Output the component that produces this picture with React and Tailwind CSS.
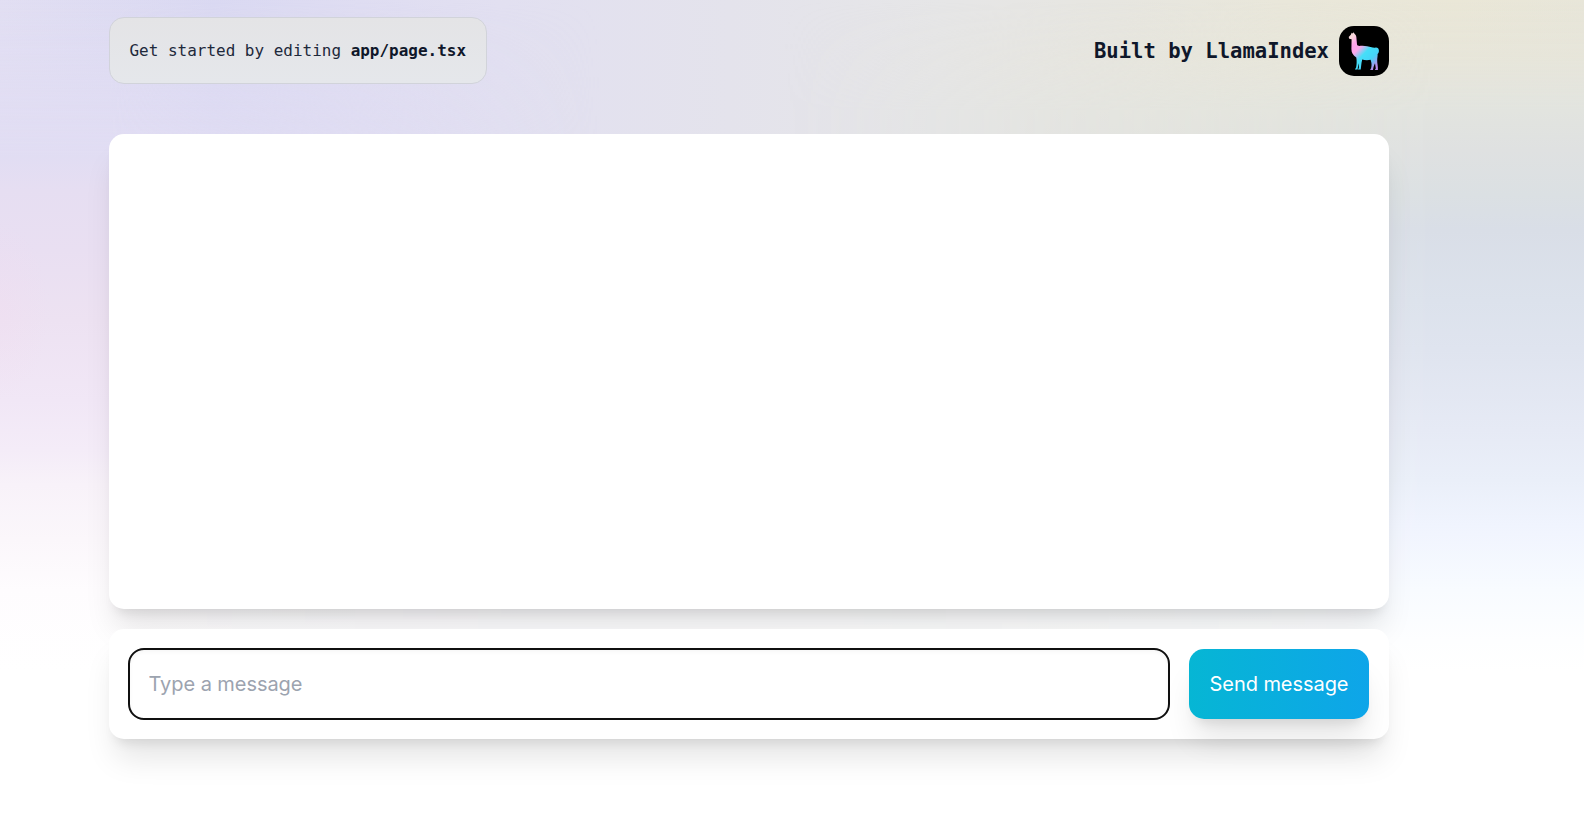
function Llama() {
  return (
    <svg viewBox="0 0 50 50" className="size-[50px] rounded-[15px]" aria-label="LlamaIndex Logo">
      <defs>
        <linearGradient id="llama" x1="10" y1="7" x2="42" y2="38" gradientUnits="userSpaceOnUse">
          <stop offset="0.03" stopColor="#f6dcd9" />
          <stop offset="0.12" stopColor="#fbd6dc" />
          <stop offset="0.25" stopColor="#ffa5ea" />
          <stop offset="0.4" stopColor="#fba8ea" />
          <stop offset="0.57" stopColor="#45dff8" />
          <stop offset="0.76" stopColor="#45d4f8" />
          <stop offset="0.95" stopColor="#bc8deb" />
        </linearGradient>
      </defs>
      <rect width="50" height="50" fill="#000" />
      <path
        fill="url(#llama)"
        d="M11.8 8.8 12.7 6.8 13.7 7.4 14.6 6.2 15.5 7.8C17 8.8 17.5 10.6 17.5 12.8L18 18.6C18.4 20.2 20.4 20 22.6 19.8C26.4 19.6 29.5 20.8 32.6 21.2C34.6 21.6 35.4 21.9 36.6 21.5C38.4 21.2 39.9 22.6 39.9 24.4C40 26.2 39.3 27.6 38.6 28C38.8 30 38.2 32 38.2 34.2C38.1 37.6 39.2 40.4 38.9 43.9L35.8 43.9 36.8 42.5 36 37.2C35.1 39 34.4 40.9 34 43.9L31.1 43.9 32.1 42.2C32.9 39.4 32.7 37 31.6 33.8C28.8 34.4 26 34.3 23.2 33.6L22.5 37 21.7 43.6 18.9 43.6 19.9 42 19.8 37.2C19.3 39 18.9 40.8 18.6 43.5L15.9 43.4 17.1 41.5C17.7 38.4 17.9 34.8 17.3 31.4C14 29.4 12.4 26.8 12.4 23L12.6 13.3 10.2 12.7 9.7 11Z"
      />
    </svg>
  );
}

function Backdrop() {
  return (
    <div className="absolute inset-0 -z-10 overflow-hidden bg-white">
      <div className="absolute inset-0 bg-[linear-gradient(90deg,#e2dff3_0px,#dad9f2_215px,#dfddf2_360px,#e2e0f1_500px,#e4e3ec_730px,#e6e6e7_940px,#e7e6e0_1120px,#e9e7da_1280px,#eae7d7_1460px,#e8e6d9_1584px)] [mask-image:linear-gradient(180deg,#000_0px,#000_200px,transparent_670px)]" />
      <div className="absolute inset-y-0 left-0 w-[600px] bg-[linear-gradient(180deg,#e0dff300_0px,#e1ddf3_155px,#e6def2_190px,#e9dff2_250px,#ede2f2_320px,#f1e7f6_400px,#f4ecf8_450px,#f8f2f9_485px,#fbf7fb_540px,#fefcfe_590px,#ffffff_670px)] [mask-image:linear-gradient(90deg,#000_0px,#000_110px,transparent_600px)]" />
      <div className="absolute inset-y-0 left-0 w-[80px] bg-[radial-gradient(ellipse_50px_90px_at_0px_310px,#f3d9ee40,#f3d9ee00)]" />
      <div className="absolute inset-y-0 right-0 w-[800px] bg-[linear-gradient(180deg,#e9e6d600_0px,#e6e5dba0_55px,#e2e4df_110px,#dfe1e1_150px,#dbe0e3_195px,#d9dee7_230px,#dce2ec_300px,#dfe4ef_350px,#e6eaf5_430px,#eaeff9_480px,#f0f4fe_525px,#f8fbff_590px,#fdfeff_640px,#ffffff_672px)] [mask-image:linear-gradient(270deg,#000_0px,#000_150px,transparent_800px)]" />
    </div>
  );
}

export default function App() {
  return (
    <main className="relative isolate flex h-[840px] w-full flex-col overflow-hidden pl-[109px] pr-[195px] pt-[17px] text-[#0f172a]">
      <Backdrop />
      <header className="flex h-[67px] w-full items-center justify-between font-['DejaVu_Sans_Mono',monospace]">
        <p className="flex h-[67px] w-[378px] items-center rounded-[15px] border border-[#d1d3da] bg-[linear-gradient(#e4e4e6,#e5e7eb)] pl-[19.5px] text-[15.98px] whitespace-pre text-[#1e293b]">
          Get started by editing <code className="font-bold font-['DejaVu_Sans_Mono',monospace] text-[#0f172a]">app/page.tsx</code>
        </p>
        <a className="flex items-center gap-[10px] text-[20.55px] font-bold">
          <span className="pt-[2px]">Built by LlamaIndex</span>
          <Llama />
        </a>
      </header>
      <section className="mt-[50px] h-[475px] w-full rounded-[15px] bg-white shadow-[0_25px_31px_-6px_rgba(0,0,0,0.1),0_10px_12px_-7px_rgba(0,0,0,0.1)]" />
      <form className="mt-5 flex h-[110px] w-full gap-5 rounded-[15px] bg-white p-5 font-[Inter,sans-serif] text-[20px] tracking-[-0.06px] shadow-[0_25px_31px_-6px_rgba(0,0,0,0.1),0_10px_12px_-7px_rgba(0,0,0,0.1)]">
        <input
          placeholder="Type a message"
          className="h-[70px] min-w-0 flex-1 rounded-[15px] bg-white px-[19.5px] outline-2 -outline-offset-1 outline-[#101010] shadow-[inset_0_2px_5px_rgba(0,0,0,0.05)] placeholder:text-[#9ca3af]"
        />
        <button
          type="button"
          className="h-[70px] w-[180px] rounded-[15px] bg-[linear-gradient(90deg,#06b6d4,#0ea5e9)] whitespace-nowrap text-white shadow-[0_25px_31px_-6px_rgba(0,0,0,0.1),0_10px_12px_-7px_rgba(0,0,0,0.1)]"
        >
          Send message
        </button>
      </form>
    </main>
  );
}
